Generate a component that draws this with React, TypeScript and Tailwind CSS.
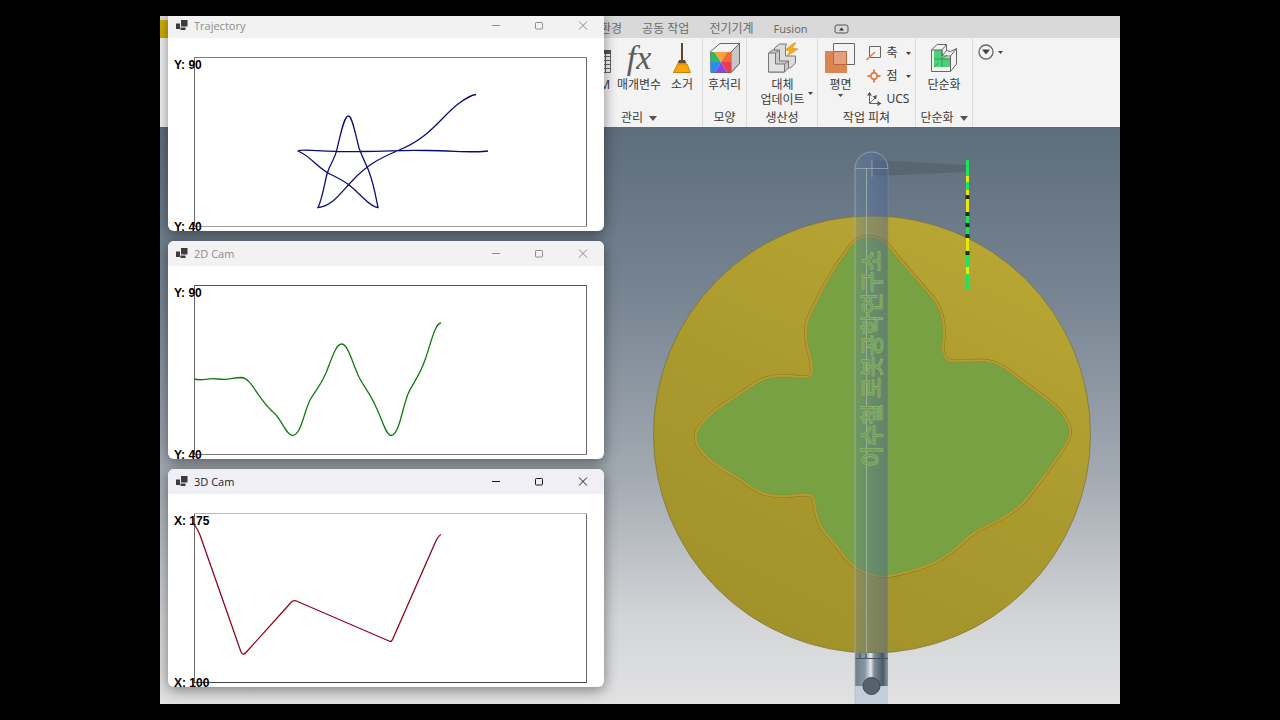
import React from 'react'

type Point = [number, number]

const dist = (a: Point, b: Point) => Math.hypot(a[0] - b[0], a[1] - b[1])

// closed spline through the points, tangents weighted by chord length
function smooth(points: Point[]): string {
  const n = points.length
  const at = (i: number) => points[(i + n) % n]
  let d = `M${points[0][0]} ${points[0][1]}`
  for (let i = 0; i < n; i++) {
    const [p0, p1, p2, p3] = [at(i - 1), at(i), at(i + 1), at(i + 2)]
    const len = dist(p1, p2)
    const k1 = len / (dist(p0, p1) + len) / 3
    const k2 = len / (dist(p2, p3) + len) / 3
    const c1 = [p1[0] + (p2[0] - p0[0]) * k1, p1[1] + (p2[1] - p0[1]) * k1]
    const c2 = [p2[0] - (p3[0] - p1[0]) * k2, p2[1] - (p3[1] - p1[1]) * k2]
    d += `C${c1[0].toFixed(2)} ${c1[1].toFixed(2)} ${c2[0].toFixed(2)} ${c2[1].toFixed(2)} ${p2[0]} ${p2[1]}`
  }
  return d + 'Z'
}

const TRAJECTORY =
  'M320 113C310 115 290 113 259 112.500S229 113 192 113.500S131 110.500 130 113' +
  'C143 118 150 131 164 137C180 145 184 149 190 155C197 161 203 169 210 169.500' +
  'C208 160 206 146 200 131C196 122 194 118 191 110C187 94 184 78 180.500 78C176 78 173 95 169 111' +
  'C167 122 162 125 159 136C156 148 154 162 150 169.500' +
  'C165 168 173 154 185 142C198 128 210 121 229 113C262 100 272 80 290 66C298 60 303 57 308 56.500'

const CAM_2D =
  'M26 113C36 115.500 38 111.500 50 113S64 111.500 73 111.500C84 112 88 131 105 146C114 153 118 169.500 124.500 169.500' +
  'C133 169.500 136 146 142 134C147 125 152 121 158 107C164 92 168 78 173.500 78' +
  'C180 78 184 96 191 111C196 121 203 129 208 141C214 153 218 169.500 223 169.500' +
  'C231 169.500 234 143 240 128C245 117 252 109 257 94C263 77 267 57 273 57'

const CAM_3D =
  'M26 31Q28 32 32 41L73 158Q75 162 78 158.500L123 108.500Q125.500 105.500 129.500 107.500L221 147Q223.500 148.500 225 144.500L267 49Q270 42 273 40.500'

const CAM_OUTLINE = smooth([
  [872, 238], [885, 244], [898, 259], [917, 281], [934, 301], [940.5, 315], [943, 333], [942, 351], [948, 361], [967, 362],
  [987, 362], [1003, 368], [1023, 383], [1050, 403], [1064, 418], [1069, 433], [1062, 448], [1042, 477], [1020, 504],
  [1000, 518], [973, 532], [957, 546], [937, 560], [913, 569], [887, 575], [870, 573], [853, 564], [837, 545], [822, 526],
  [817, 512], [814, 497], [807, 493.5], [783, 495], [763, 492], [740, 478], [712, 460], [700, 447], [697, 436], [702, 425],
  [715, 412], [743, 393], [762, 381], [780, 377], [807, 378], [812.5, 374], [812, 360], [808, 343], [808, 323], [815, 307],
  [830, 278], [847, 252], [857, 241],
])

interface CamWindow {
  title: string
  active?: boolean
  top: string
  bottom: string
  path: string
  stroke: string
  topLine: string
  bottomLine: string
}

const WINDOWS: CamWindow[] = [
  { title: 'Trajectory', top: 'Y: 90', bottom: 'Y: 40', path: TRAJECTORY, stroke: '#0b0b78', topLine: '#7c7c7c', bottomLine: '#9c9c9c' },
  { title: '2D Cam', top: 'Y: 90', bottom: 'Y: 40', path: CAM_2D, stroke: '#107a10', topLine: '#555555', bottomLine: '#7c7c7c' },
  { title: '3D Cam', active: true, top: 'X: 175', bottom: 'X: 100', path: CAM_3D, stroke: '#8e0620', topLine: '#b4b8b8', bottomLine: '#444444' },
]

function FormIcon() {
  return (
    <svg width="12" height="12" viewBox="0 0 12 12" fill="#3c3c3e" aria-hidden="true">
      <path d="M0 3.500h4v5.500h-4zM5 0h6.500v6.500h-6.500zM4.500 7.500h5v2.500h-5z" />
    </svg>
  )
}

function TitleBar({ title, active }: { title: string; active?: boolean }) {
  return (
    <header className={active ? 'flex h-[25px] shrink-0 items-center bg-[#f0eff5] pl-2 text-[#1c1c1c]' : 'flex h-[25px] shrink-0 items-center bg-[#f2f2f2] pl-2 text-[#8c8c8c]'}>
      <FormIcon />
      <h2 className="ml-1.5 flex-1 font-['Open_Sans','Noto_Sans',sans-serif] text-[11px] leading-4">{title}</h2>
      <button type="button" aria-label="Minimize" className="flex h-full w-[43px] items-center justify-center">
        <svg width="10" height="10" viewBox="0 0 10 10" fill="none" stroke="currentColor"><path d="M0 4.500h8" /></svg>
      </button>
      <button type="button" aria-label="Maximize" className="flex h-full w-[43px] items-center justify-center">
        <svg width="10" height="10" viewBox="0 0 10 10" fill="none" stroke="currentColor"><rect x="0.5" y="1.5" width="7" height="6.500" rx="0.8" /></svg>
      </button>
      <button type="button" aria-label="Close" className="flex h-full w-[43px] items-center justify-center">
        <svg width="10" height="10" viewBox="0 0 10 10" fill="none" stroke="currentColor"><path d="M1 0.500l8 8M9 0.500l-8 8" /></svg>
      </button>
    </header>
  )
}

function ChartWindow({ win }: { win: CamWindow }) {
  return (
    <section className="flex h-[218px] flex-col overflow-hidden rounded-md bg-white shadow-[0_3px_14px_rgba(0,0,0,0.45)]">
      <TitleBar title={win.title} active={win.active} />
      <svg className="w-full" viewBox="0 0 436 193" fill="none">
        <path d="M26.500 19V188M418.500 19V188" stroke="#6a6a6a" />
        <path d="M26 19.500H419" stroke={win.topLine} />
        <path d="M26 188.500H419" stroke={win.bottomLine} />
        <path d={win.path} stroke={win.stroke} strokeWidth="1.3" />
        <g className="font-['Liberation_Sans',sans-serif] text-[12px] font-bold" fill="#000">
          <text x="6" y="31">{win.top}</text>
          <text x="6" y="193">{win.bottom}</text>
        </g>
      </svg>
    </section>
  )
}

function Caret({ large }: { large?: boolean }) {
  return large ? (
    <svg width="8" height="5" viewBox="0 0 8 5" fill="#555"><path d="M0 0h8L4 5z" /></svg>
  ) : (
    <svg width="5" height="3" viewBox="0 0 5 3" fill="#444"><path d="M0 0h5L2.500 3z" /></svg>
  )
}

function BomIcon() {
  return (
    <svg width="32" height="32" viewBox="0 0 32 32" fill="none" stroke="#666">
      <path d="M6.500 8.500h24v22h-24zM6 14.500h25M6 18.500h25M6 22.500h25M6 26.500h25M14.500 12v18M25.500 12v18" fill="#f5f5f5" />
      <path d="M6 8h25v4H6z" fill="#555" stroke="none" />
    </svg>
  )
}

function FxIcon() {
  return (
    <span aria-hidden="true" className="font-['Liberation_Serif',serif] text-[34px] leading-7 text-[#5c5c5c] italic">fx</span>
  )
}

function BroomIcon() {
  return (
    <svg width="32" height="32" viewBox="0 0 32 32">
      <path d="M15 1h2v17H15z" fill="#5f452c" />
      <path d="M13 18h6l1.500 3.500H11.500z" fill="#5d4a38" />
      <path d="M11.500 22h9.500l3.500 8.500H7.500z" fill="#f5a70a" stroke="#c98509" />
    </svg>
  )
}

function ColorCubeIcon() {
  return (
    <svg width="32" height="32" viewBox="0 0 32 32">
      <path d="M1.500 9.500L11 1.500h19.500v20L22 30.500h-20z" fill="#f4f4f4" stroke="#666" />
      <path d="M22 10l8.500-8.500v20L22 30.500z" fill="#c6c6c6" stroke="#666" />
      <path d="M1.500 10H6l6 10H1.500z" fill="#2fb866" />
      <path d="M5 10h14l-7 10z" fill="#f6a53a" />
      <path d="M18.500 10H22v10H12z" fill="#f2673b" />
      <path d="M1.500 20H12L6 30.500H1.500z" fill="#2a8ee8" />
      <path d="M12 20l6 10.500H6z" fill="#7d4be6" />
      <path d="M12 20h10v10.500h-4z" fill="#e93d4b" />
    </svg>
  )
}

function SubstituteIcon() {
  return (
    <svg width="32" height="32" viewBox="0 0 32 32" stroke="#777" strokeLinejoin="round">
      <path d="M7.500 8V6l5-4h7l-1 3v9h10v7l-5 5H7.500z" fill="#dcdcdc" />
      <path d="M1.500 11l4-3h7v11h9v7l-4 4h-16z" fill="#c9c9c9" />
      <path d="M1.500 11h7v11h9v8h-16zM8.500 11l4-3M17.500 22l4-3" fill="#e2e2e2" />
      <path d="M27 1l-9 7 5 1-3 5 11-7-6-1 4-5z" fill="#f7a81b" stroke="#d98a0a" strokeWidth="0.6" />
    </svg>
  )
}

function PlaneIcon() {
  return (
    <svg width="32" height="32" viewBox="0 0 32 32" fill="none">
      <path d="M9.500 1.500h21v21h-21z" stroke="#666" />
      <path d="M1 9h22v22H1z" fill="#dd8453" />
      <path d="M9.500 9.500h13v13h-13z" fill="#e3a07c" stroke="#b9663a" />
    </svg>
  )
}

function SimplifyIcon() {
  return (
    <svg width="32" height="32" viewBox="0 0 32 32" stroke="#666" strokeLinejoin="round">
      <path d="M3.500 8L9 2.500h9.500v6l4 1 6-3V22l-6 7.500h-19z" fill="#f2f2f2" />
      <path d="M6 8h8v7.500h8V25H6z" fill="#4dd07c" stroke="none" />
      <path d="M6 17h16M14 8v17M14 17l5-4M6 25l4-4" stroke="#2da458" fill="none" />
      <path d="M3.500 8H14l4.500-5.500M14 8v6h8.500v15.500M14 14l4.500-5.500M22.500 14l6-7.500M3.500 8v21" fill="none" />
    </svg>
  )
}

function AxisIcon() {
  return (
    <svg width="16" height="16" viewBox="0 0 16 16" fill="none">
      <path d="M3.500 0.500h11v11h-11z" stroke="#666" />
      <path d="M0.500 14L9 6" stroke="#dd8453" strokeWidth="1.600" />
    </svg>
  )
}

function PointIcon() {
  return (
    <svg width="16" height="16" viewBox="0 0 16 16" fill="none" stroke="#dd8453">
      <circle cx="8" cy="7" r="3.2" strokeWidth="2" />
      <path d="M8 0.500v3.500M8 10v3.500M1.500 7h3.500M11 7h3.500" strokeWidth="2" />
    </svg>
  )
}

function UcsIcon() {
  return (
    <svg width="16" height="16" viewBox="0 0 16 16" fill="none" stroke="#666">
      <path d="M3.500 0v11.500H15M3.500 11.500l6-6" />
      <path d="M1 3.500L3.500 0 6 3.500zM11.500 9l4 2.500-4 2.500zM6.500 4.500l4.500-1.500-1 4.500z" fill="#555" stroke="none" />
    </svg>
  )
}

interface ToolProps {
  icon: React.ReactNode
  label: string
  second?: string
  menu?: boolean
  width: string
}

function Tool({ icon, label, second, menu, width }: ToolProps) {
  return (
    <button type="button" className={`flex shrink-0 flex-col items-center whitespace-nowrap ${width}`}>
      <span className="flex h-8 w-8 shrink-0 items-center justify-center">{icon}</span>
      <span className="mt-[3px] leading-[15px]">{label}</span>
      {second && <span className="leading-[15px]">{second}</span>}
      {menu && <span className="mt-0.5"><Caret /></span>}
    </button>
  )
}

function SmallTool({ icon, label, menu }: { icon: React.ReactNode; label: string; menu?: boolean }) {
  return (
    <button type="button" className="flex h-[23px] items-center gap-1 leading-4">
      {icon}
      <span className="pb-0.5">{label}</span>
      {menu && <span className="ml-1"><Caret /></span>}
    </button>
  )
}

function Panel({ title, menu, width, children }: { title: string; menu?: boolean; width: string; children: React.ReactNode }) {
  return (
    <section className={`flex shrink-0 flex-col border-r border-[#dcdcdc] ${width}`}>
      <div className="flex h-[72px] items-start justify-center pt-1">{children}</div>
      <h3 className="flex h-4 items-center justify-center gap-1.5 whitespace-nowrap">
        {title}
        {menu && <Caret large />}
      </h3>
    </section>
  )
}

function Ribbon() {
  return (
    <div className="font-['Noto_Sans','Noto_Sans_CJK_KR',sans-serif] text-[12px] text-[#3a3a3a]">
      <div className="flex h-[22px] bg-[#d9d9d9]">
        <div className="mt-1 w-2 bg-[#cfae08]" />
        <nav className="flex items-center gap-5 pt-1 pl-[432px] text-[#6a6a6a]">
          <a href="#env">환경</a>
          <a href="#collab">공동 작업</a>
          <a href="#electro">전기기계</a>
          <a href="#fusion" className="text-[11px]">Fusion</a>
          <button type="button" aria-label="Minimize ribbon" className="ml-1.5">
            <svg width="15" height="10" viewBox="0 0 15 10" fill="none" stroke="#555">
              <rect x="1" y="1" width="13" height="8" rx="2" />
              <path d="M5 6.500h5L7.500 3.500z" fill="#333" stroke="none" />
            </svg>
          </button>
        </nav>
      </div>
      <div className="flex h-[90px] border-b border-[#5b6b78] bg-[#f3f3f3] pl-[416px]">
        <Panel title="관리" menu width="w-[127px]">
          <Tool icon={<BomIcon />} label="BOM" width="w-8" />
          <Tool icon={<FxIcon />} label="매개변수" width="w-[54px]" />
          <Tool icon={<BroomIcon />} label="소거" width="w-8" />
        </Panel>
        <Panel title="모양" width="w-11">
          <Tool icon={<ColorCubeIcon />} label="후처리" width="w-10" />
        </Panel>
        <Panel title="생산성" width="w-[71px]">
          <div className="flex items-end pl-1.5">
            <Tool icon={<SubstituteIcon />} label="대체" second="업데이트" width="w-[50px]" />
            <span className="mb-3"><Caret /></span>
          </div>
        </Panel>
        <Panel title="작업 피쳐" width="w-[98px]">
          <Tool icon={<PlaneIcon />} label="평면" menu width="w-9" />
          <div className="ml-2 flex flex-col">
            <SmallTool icon={<AxisIcon />} label="축" menu />
            <SmallTool icon={<PointIcon />} label="점" menu />
            <SmallTool icon={<UcsIcon />} label="UCS" />
          </div>
        </Panel>
        <Panel title="단순화" menu width="w-[57px]">
          <Tool icon={<SimplifyIcon />} label="단순화" width="w-10" />
        </Panel>
        <button type="button" aria-label="Ribbon options" className="mt-1.5 ml-[5px] flex h-4 items-center gap-1">
          <svg width="16" height="16" viewBox="0 0 16 16" fill="none" stroke="#666">
            <circle cx="8" cy="8" r="7" strokeWidth="1.300" />
            <path d="M4 5.500h8L8 10.500z" fill="#444" stroke="none" />
          </svg>
          <Caret />
        </button>
      </div>
    </div>
  )
}

function Viewport() {
  return (
    <svg className="min-h-0 w-full flex-1" viewBox="160 128 960 576" preserveAspectRatio="xMidYMin slice">
      <defs>
        <linearGradient id="sky" x1="0" y1="0" x2="0" y2="1">
          <stop offset="0" stopColor="#5d6d7c" />
          <stop offset="0.3" stopColor="#788593" />
          <stop offset="0.6" stopColor="#a2a9b1" />
          <stop offset="0.85" stopColor="#d2d4d6" />
          <stop offset="1" stopColor="#e2e2e3" />
        </linearGradient>
        <linearGradient id="disc" x1="0.8" y1="0" x2="0.3" y2="1">
          <stop offset="0" stopColor="#b9a834" />
          <stop offset="0.5" stopColor="#ab9a2e" />
          <stop offset="1" stopColor="#a0922a" />
        </linearGradient>
        <linearGradient id="rod" x1="0" y1="0" x2="1" y2="0">
          <stop offset="0" stopColor="#6482a0" stopOpacity="0.3" />
          <stop offset="0.35" stopColor="#5877a0" stopOpacity="0.42" />
          <stop offset="1" stopColor="#465f96" stopOpacity="0.46" />
        </linearGradient>
        <linearGradient id="steel" x1="0" y1="0" x2="1" y2="0">
          <stop offset="0" stopColor="#6f7f8d" />
          <stop offset="0.3" stopColor="#8796a4" />
          <stop offset="0.48" stopColor="#e4eaee" />
          <stop offset="0.58" stopColor="#7c8b98" />
          <stop offset="0.85" stopColor="#4c5a68" />
          <stop offset="1" stopColor="#8b99a6" />
        </linearGradient>
      </defs>
      <rect x="160" y="127" width="960" height="577" fill="url(#sky)" />

      <path d="M872 160L966 165V172L888 175.500L872 175z" fill="#56626d" opacity="0.8" />
      <circle cx="872" cy="434.500" r="218.500" fill="url(#disc)" stroke="#6f6a30" strokeWidth="0.600" />

      {/* cam groove */}
      <path d={CAM_OUTLINE} fill="none" stroke="#94791f" strokeWidth="6" />
      <path d={CAM_OUTLINE} fill="none" stroke="#b49d30" strokeWidth="4.800" />
      <path d={CAM_OUTLINE} fill="#77a143" stroke="#8a8730" strokeWidth="0.500" />

      {/* shaft */}
      <path d="M855 653h33v33h-33z" fill="url(#steel)" />
      <path d="M855 658.500h33M860 653v5M866 653v5M882 653v5" stroke="#46525e" strokeWidth="1.200" />
      <path d="M855 686h33v18h-33z" fill="#c3cddb" />
      <path d="M855 653V168a16.500 16 0 0 1 33 0V653z" fill="url(#rod)" />
      <path d="M855 704V168a16.500 16 0 0 1 33 0M855 168.500h33M872 160v17" fill="none" stroke="#a9b7c4" strokeWidth="0.800" opacity="0.8" />
      <path d="M888 168V653" stroke="#8e9a7c" strokeWidth="0.800" opacity="0.6" />
      <path d="M866.500 168V653" stroke="#b5c6a8" strokeWidth="1" opacity="0.65" />
      <circle cx="871.500" cy="686" r="8.500" fill="#55626e" stroke="#3c4752" />

      <text
        transform="translate(880 467) rotate(-90)"
        className="font-['Noto_Sans_CJK_KR',sans-serif] text-[23px] font-medium"
        fill="#6d9860"
        stroke="#8fb566"
        strokeWidth="0.800"
      >
        이수철 로봇공학연구소
      </text>

      {/* laser line */}
      <path d="M967.500 160v130" stroke="#22e25a" strokeWidth="3" />
      <path d="M967.500 176v6M967.500 190v25M967.500 238v16M967.500 267v7" stroke="#e6e80e" strokeWidth="3" />
      <path d="M967.500 195v4M967.500 212v4M967.500 223v4M967.500 234v4M967.500 251v4" stroke="#16300f" strokeWidth="4" />
    </svg>
  )
}

export default function App() {
  return (
    <div className="flex h-screen justify-center overflow-hidden bg-black py-4">
      <main className="relative flex w-3/4 flex-col overflow-hidden">
        <Ribbon />
        <Viewport />
        <div className="absolute -top-[3px] left-2 flex w-[436px] flex-col gap-2.5">
          {WINDOWS.map((win) => (
            <ChartWindow key={win.title} win={win} />
          ))}
        </div>
      </main>
    </div>
  )
}
